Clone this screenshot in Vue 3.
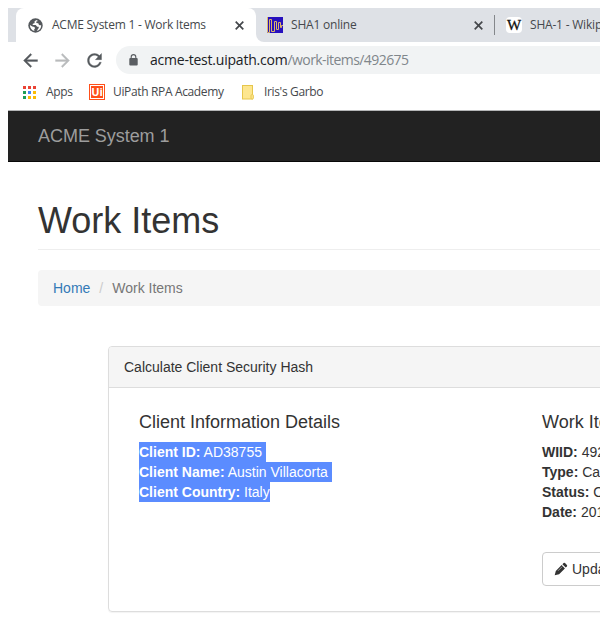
<script setup>
const dots = ['#ea4335', '#ea4335', '#ea4335', '#1e9e58', '#4285f4', '#fbbc05', '#1e9e58', '#fbbc05', '#fbbc05']
const client = [
  { label: 'Client ID:', value: 'AD38755', tail: true },
  { label: 'Client Name:', value: 'Austin Villacorta', tail: true },
  { label: 'Client Country:', value: 'Italy', tail: false },
]
const item = [
  { label: 'WIID:', value: '492675' },
  { label: 'Type:', value: 'Calculate' },
  { label: 'Status:', value: 'Open' },
  { label: 'Date:', value: '2019' },
]
</script>

<template>
  <div class="window">
    <div class="tabs">
      <div class="tab active">
        <svg class="globe" width="15" height="15" viewBox="0 0 15 15">
          <circle cx="7.5" cy="7.5" r="7.2" fill="#54585c" />
          <path d="M8.2 2.1 6.3 3.7 6.8 5 4.9 5.7 4.6 7h3.1l1.5 1.7h1.5v1.4l-2 2.8c3-.5 4.6-2.8 4.5-5.6-.1 0-1.8.1-2.3-.5l-.6-1.5-2-.2.1-1.5 1.7-.5zM1.9 7.1c-.1 3 1.7 5.3 4.5 5.9l-.2-1.8.8-.8-.5-1.3-2.2-.5z" fill="#fff" />
        </svg>
        <span class="t1">ACME System 1 - Work Items</span>
        <svg class="x1" width="9" height="9" viewBox="0 0 9 9"><path d="m.7.7 7.6 7.6m0-7.6L.7 8.3" stroke="#44474b" stroke-width="1.7" /></svg>
      </div>
      <div class="tab sha">
        <svg class="fav" width="16" height="16" viewBox="0 0 16 16">
          <rect width="16" height="16" fill="#2710bd" />
          <path d="M.5 0v15.5h2v-13h2v12h3v-10h2v8h2v-7h2v5h1v-2H16" fill="none" stroke="#dcb56b" />
        </svg>
        <span class="t2">SHA1 online</span>
        <svg class="x2" width="9" height="9" viewBox="0 0 9 9"><path d="m.7.7 7.6 7.6m0-7.6L.7 8.3" stroke="#44474b" stroke-width="1.7" /></svg>
      </div>
      <div class="tab wiki">
        <span class="wfav">W</span>
        <span class="t3">SHA-1 - Wikipedia</span>
      </div>
    </div>

    <div class="toolbar">
      <svg width="21" height="21" viewBox="0 0 24 24"><path fill="#55595d" stroke="#55595d" stroke-width=".4" d="M20 11H7.83l5.59-5.59L12 4l-8 8 8 8 1.41-1.41L7.83 13H20v-2z" /></svg>
      <svg width="21" height="21" viewBox="0 0 24 24"><path fill="#b9bbbd" stroke="#b9bbbd" stroke-width=".4" d="m12 4-1.41 1.41L16.17 11H4v2h12.17l-5.58 5.59L12 20l8-8z" /></svg>
      <svg width="21" height="21" viewBox="0 0 24 24"><path fill="#55595d" stroke="#55595d" stroke-width=".4" d="M17.65 6.35C16.2 4.9 14.21 4 12 4c-4.42 0-7.99 3.58-7.99 8s3.57 8 7.99 8c3.73 0 6.84-2.55 7.73-6h-2.08c-.82 2.33-3.04 4-5.65 4-3.31 0-6-2.69-6-6s2.69-6 6-6c1.66 0 3.14.69 4.22 1.78L13 11h7V4l-2.35 2.35z" /></svg>
      <div class="address">
        <svg width="9" height="12" viewBox="0 0 9 12"><rect x=".3" y="4" width="8.4" height="7.5" rx="1" fill="#5a5e62" /><path d="M2.2 4.5V2.9a2.3 2.3 0 0 1 4.6 0v1.6" fill="none" stroke="#5a5e62" stroke-width="1.1" /></svg>
        <span class="url"><span class="host">acme-test.uipath.com</span><span class="path">/work-items/492675</span></span>
      </div>
    </div>

    <div class="bookmarks">
      <div class="dots"><i v-for="(c, n) in dots" :key="n" :style="{ background: c }"></i></div>
      <span class="b1">Apps</span>
      <span class="ui"><b>Ui</b></span>
      <span class="b2">UiPath RPA Academy</span>
      <svg class="folder" width="12" height="15" viewBox="0 0 12 15"><rect x=".5" y=".5" width="10" height="13.5" fill="#fde68f" stroke="#e6c64c" /><rect x="9" y="9.6" width="2.4" height="4.4" rx="1" fill="#fde68f" stroke="#e6c64c" stroke-width=".9" /></svg>
      <span class="b3">Iris's Garbo</span>
    </div>

    <nav class="navbar">ACME System 1</nav>

    <main>
      <h1>Work Items</h1>
      <div class="crumbs"><a>Home</a><span class="sep">/</span><span>Work Items</span></div>
      <section class="panel">
        <header>Calculate Client Security Hash</header>
        <div class="cols">
          <div class="col left">
            <h4>Client Information Details</h4>
            <div v-for="r in client" :key="r.label" class="row"><span class="sel" :class="{ tail: r.tail }"><b>{{ r.label }}</b> {{ r.value }}</span></div>
          </div>
          <div class="col">
            <h4>Work Item Details</h4>
            <div v-for="r in item" :key="r.label" class="row"><b>{{ r.label }}</b> {{ r.value }}</div>
            <button class="update">
              <svg width="14" height="14" viewBox="0 0 14 14"><path fill="#333" d="M.7 13.3 1.8 8.9 7.6 3.1l3.3 3.3-5.8 5.8zM8.4 2.3 9.6 1.1q.7-.6 1.4 0l1.9 1.9q.6.7 0 1.4l-1.2 1.2z" /><path d="m4 8.8 4.2-4.2" stroke="#fff" stroke-width=".5" /></svg>
              <span>Update</span>
            </button>
          </div>
        </div>
      </section>
    </main>
  </div>
</template>

<style>
body { margin: 0; background: #fff; }
</style>

<style scoped>
* { box-sizing: border-box; }
.window { width: 600px; height: 632px; padding: 8px 0 0 8px; overflow: hidden; background: #fff; font-family: "Open Sans", "Noto Sans", sans-serif; color: #45484c; white-space: nowrap; }
svg { flex: none; display: block; }
.tabs { display: flex; height: 34px; background: linear-gradient(#fff, #fff) 8px 8px / 250px 26px no-repeat, #dee1e6; padding-left: 8px; overflow: hidden; font-size: 12px; }
.tab { display: flex; align-items: center; height: 34px; flex: none; }
.tab > span { line-height: 34px; }
.active { width: 240px; background: #fff; border-radius: 8px 8px 0 0; padding-left: 12px; }
.t1 { width: 183px; margin-left: 9px; letter-spacing: -.24px; }
.sha { width: 238px; background: #dee1e6; border-radius: 0 0 0 8px; padding-left: 11px; }
.t2 { width: 183px; margin-left: 8px; letter-spacing: -.2px; }
.wiki::before { content: ""; width: 1px; height: 20px; background: #84878b; margin-right: 11px; }
.wiki > .wfav { width: 16px; height: 16px; border-radius: 4px; background: #fff; color: #111; -webkit-text-stroke: .3px #111; font-family: "Liberation Serif", serif; font-size: 15px; line-height: 16px; display: flex; align-items: center; justify-content: center; }
.t3 { margin-left: 8px; letter-spacing: -.2px; }
.toolbar { display: flex; align-items: center; height: 36px; padding-left: 11.5px; gap: 11px; }
.address { flex: 1; height: 28px; margin-left: .5px; background: #f1f3f4; border-radius: 14px 0 0 14px; display: flex; align-items: center; padding-left: 13px; }
.url { margin-left: 12px; font-size: 14px; line-height: 28px; letter-spacing: -.2px; }
.host { color: #202124; }
.path { color: #80868b; letter-spacing: -.56px; }
.host { letter-spacing: -.22px; }
.bookmarks { display: flex; align-items: center; height: 32px; padding: 0 0 4px 15px; font-size: 12px; }
.bookmarks > span:not(.ui) { padding-bottom: 1px; }
.dots { display: grid; grid-template-columns: repeat(3, 3px); gap: 2px; width: 13px; flex: none; }
.dots i { height: 3px; }
.b1 { width: 43px; margin-left: 10px; letter-spacing: -.3px; }
.ui { width: 16px; height: 16px; background: #ff4f1a; outline: 1px solid #fff; outline-offset: -2px; color: #fff; display: flex; align-items: center; justify-content: center; font-size: 11px; line-height: 12px; flex: none; }
.b2 { width: 129px; margin-left: 8px; letter-spacing: -.35px; }
.b3 { margin-left: 10px; letter-spacing: -.35px; }
.navbar { height: 52px; border-top: 1px solid #b5b6b7; border-bottom: 1px solid #080808; background: #222; color: #9d9d9d; font: 18px/50px "Liberation Sans", Arial, sans-serif; padding-left: 30px; letter-spacing: -.04px; }
main { padding: 39px 0 0 30px; font: 14px/20px "Liberation Sans", Arial, sans-serif; color: #333; }
h1 { font-size: 36px; line-height: 40px; font-weight: 400; margin: 0 0 20px; padding-bottom: 8px; border-bottom: 1px solid #eee; }
.crumbs { height: 36px; padding: 8px 15px; background: #f5f5f5; border-radius: 4px 0 0 4px; color: #777; }
.crumbs a { color: #337ab7; }
.sep { color: #ccc; padding: 0 9px; }
.panel { width: 540px; height: 266px; margin: 40px 0 0 70px; border: 1px solid #ddd; border-radius: 4px; box-shadow: 0 1px 1px rgba(0,0,0,.05); overflow: hidden; }
.panel header { height: 41px; padding: 10px 15px; background: #f5f5f5; border-bottom: 1px solid #ddd; }
.cols { display: flex; padding: 25px 30px 0; }
.col { flex: none; }
.left { width: 403px; }
h4 { font-size: 18px; line-height: 19px; font-weight: 400; margin: 0 0 10px; }
.row { height: 20px; }
.sel { display: inline-block; height: 20px; background: #5b8cff; color: #fff; }
.tail { padding-right: 4px; }
.update { display: flex; align-items: center; height: 34px; margin-top: 30px; padding: 0 12px 0 11px; gap: 4px; border: 1px solid #ccc; border-radius: 4px; background: #fff; color: #333; font: inherit; }
</style>
